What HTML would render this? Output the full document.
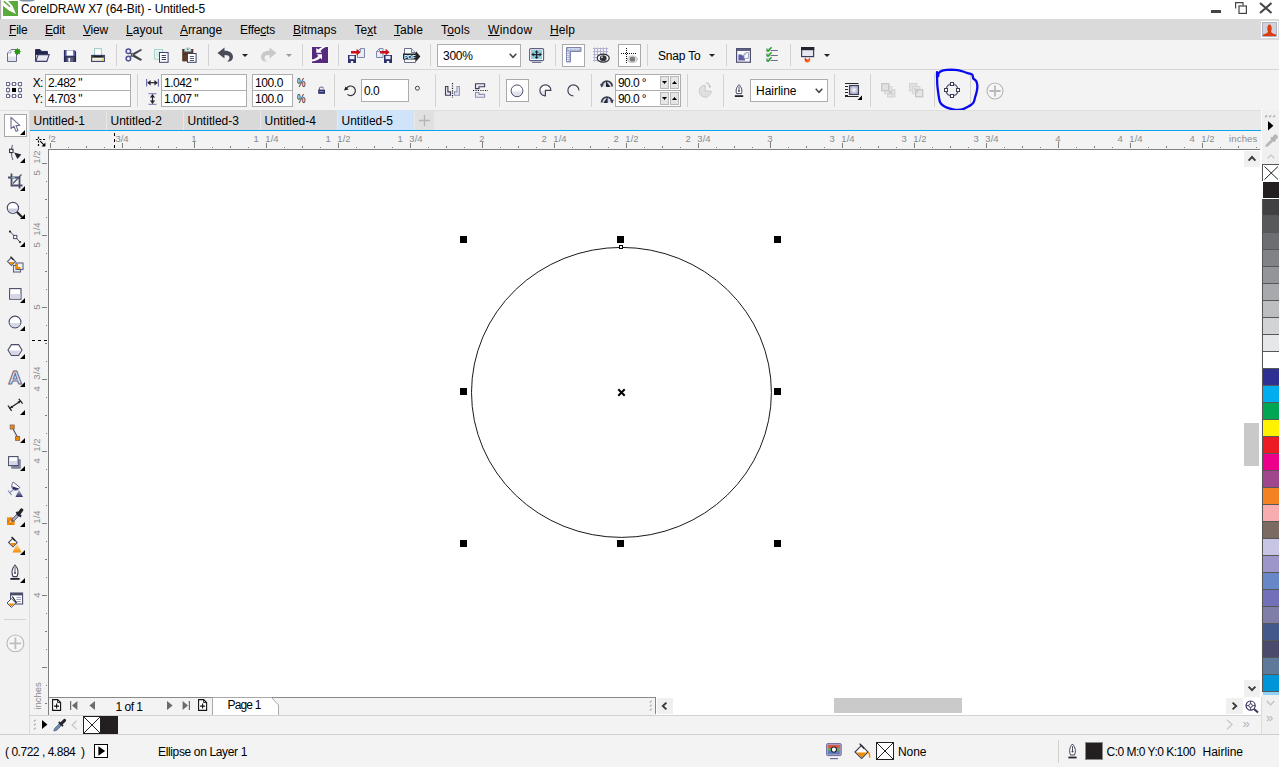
<!DOCTYPE html><html><head><meta charset="utf-8"><title>CorelDRAW X7 (64-Bit) - Untitled-5</title><style>
html,body{margin:0;padding:0}
body{width:1279px;height:767px;overflow:hidden;background:#f0f0f0;position:relative;
 font-family:"Liberation Sans",sans-serif;font-size:12px;color:#111;}
.a{position:absolute}
.t{position:absolute;white-space:nowrap;line-height:14px;height:14px;transform-origin:0 50%}
.box{position:absolute;box-sizing:border-box}
svg{position:absolute;overflow:visible}
u{text-decoration:underline;text-underline-offset:1px}
.inp{position:absolute;box-sizing:border-box;background:#fff;border:1px solid #ababab}
.sep{position:absolute;width:1px;background:#d0d0d0}
</style></head><body>
<div class="box" style="left:0px;top:0px;width:1279px;height:19px;background:#fff;"></div>
<div class="box" style="left:0px;top:19px;width:1279px;height:21px;background:#dadada;"></div>
<div class="box" style="left:0px;top:40px;width:1279px;height:29px;background:#f3f3f3;"></div>
<div class="box" style="left:0px;top:69px;width:1279px;height:1px;background:#d6d6d6;"></div>
<div class="box" style="left:0px;top:70px;width:1279px;height:40px;background:#f3f3f3;"></div>
<div class="box" style="left:0px;top:110px;width:1279px;height:21px;background:#f0f0f0;"></div>
<div class="box" style="left:0px;top:110px;width:30px;height:625px;background:#f2f2f2;"></div>
<div class="box" style="left:0px;top:110px;width:30px;height:1px;background:#e2e2e2;"></div>
<div class="box" style="left:49px;top:150px;width:1212px;height:548px;background:#fff;"></div>
<svg style="left:0;top:0" width="40" height="19" viewBox="0 0 40 19">
<rect x="0" y="0" width="1.2" height="19" fill="#b4b4b4"/>
<ellipse cx="27" cy="0" rx="8" ry="1.6" fill="#7d92a3"/>
<rect x="3" y="1" width="15" height="15" fill="#5aaa3c"/>
<path d="M3 1 L8.3 1 L12.5 6 L16 14 L9 10.5 L3 5.8 Z" fill="#fff"/>
<path d="M4.2 1.6 L9.6 6.3" stroke="#5aaa3c" stroke-width="1.4" stroke-linecap="round"/>
</svg>
<div class="t" style="left:21px;top:2px;font-size:12px;letter-spacing:-0.106px;color:#000;">CorelDRAW X7 (64-Bit) - Untitled-5</div>
<div class="box" style="left:1211px;top:10px;width:10px;height:3px;background:#444;"></div>
<svg style="left:1234px;top:1px" width="14" height="14" viewBox="0 0 14 14" fill="none" stroke="#444" stroke-width="1.2">
<path d="M1.6 7.5 V1.6 H9 V4.5" /><rect x="5" y="5" width="7.4" height="7.4"/></svg>
<svg style="left:1259px;top:2px" width="14" height="12" viewBox="0 0 14 12" fill="none" stroke="#444" stroke-width="2">
<path d="M1 1 L12.5 11 M12.5 1 L1 11"/></svg>
<div class="t" style="left:9px;top:23px;font-size:12px;letter-spacing:-0.211px;color:#000;"><u>F</u>ile</div>
<div class="t" style="left:45px;top:23px;font-size:12px;letter-spacing:-0.168px;color:#000;"><u>E</u>dit</div>
<div class="t" style="left:83px;top:23px;font-size:12px;letter-spacing:-0.199px;color:#000;"><u>V</u>iew</div>
<div class="t" style="left:126px;top:23px;font-size:12px;letter-spacing:0.081px;color:#000;"><u>L</u>ayout</div>
<div class="t" style="left:180px;top:23px;font-size:12px;letter-spacing:-0.098px;color:#000;"><u>A</u>rrange</div>
<div class="t" style="left:240px;top:23px;font-size:12px;letter-spacing:-0.205px;color:#000;">Effe<u>c</u>ts</div>
<div class="t" style="left:293px;top:23px;font-size:12px;letter-spacing:0.022px;color:#000;"><u>B</u>itmaps</div>
<div class="t" style="left:354.5px;top:23px;font-size:12px;letter-spacing:0.000px;color:#000;">Te<u>x</u>t</div>
<div class="t" style="left:394px;top:23px;font-size:12px;letter-spacing:0.062px;color:#000;"><u>T</u>able</div>
<div class="t" style="left:441px;top:23px;font-size:12px;letter-spacing:0.197px;color:#000;">T<u>o</u>ols</div>
<div class="t" style="left:488px;top:23px;font-size:12px;letter-spacing:0.302px;color:#000;"><u>W</u>indow</div>
<div class="t" style="left:550px;top:23px;font-size:12px;letter-spacing:0.078px;color:#000;"><u>H</u>elp</div>
<div class="box" style="left:1261px;top:21px;width:17px;height:17px;background:#fff;"></div>
<div class="box" style="left:1262px;top:22px;width:15px;height:15px;background:#cfd2dc;border:1px solid #aeb2c0"></div>
<svg style="left:1263px;top:23px" width="13" height="13" viewBox="0 0 13 13"><path d="M0 13 V11.5 C2 10.5 4.5 10.5 5 8.5 C3.5 6 4.5 1.5 6.5 1.5 C8.5 1.5 9.5 6 8 8.5 C8.5 10.5 11 10.5 13 11.5 V13 Z" fill="#dd3d0e"/></svg>
<svg style="left:6px;top:47px" width="16" height="16" viewBox="0 0 16 16" ><path d="M1.5 6 L5 2.5 H10.5 V14.5 H1.5 Z" fill="#fff" stroke="#6a6d8c" stroke-width="1"/>
<path d="M1.5 6 H5 V2.5" fill="#dfeef0" stroke="#8f93b8" stroke-width="0.8"/><rect x="2" y="9.5" width="8" height="4.5" fill="#e0e2ee"/>
<path d="M11.4 0.8 L12.2 2.4 L14 2 L13.6 3.8 L15.2 4.6 L13.6 5.4 L14 7.2 L12.2 6.8 L11.4 8.4 L10.6 6.8 L8.8 7.2 L9.2 5.4 L7.6 4.6 L9.2 3.8 L8.8 2 L10.6 2.4 Z" fill="#2a9a10"/><circle cx="11.4" cy="4.6" r="2.4" fill="#2a9a10"/></svg>
<svg style="left:35px;top:49px" width="15" height="13" viewBox="0 0 15 13" ><path d="M0.6 12 V0.6 H5 L6.6 2.4 H12.4 V5.4 H0.6" fill="#23254f" stroke="#23254f" stroke-width="1"/>
<path d="M0.8 12.4 L3.2 5.6 H14.2 L11.8 12.4 Z" fill="#e6e8f2" stroke="#3d3f6a" stroke-width="1.1"/></svg>
<svg style="left:64px;top:50px" width="12" height="12" viewBox="0 0 12 12" ><path d="M0 0 H10.4 L12 1.6 V12 H0 Z" fill="#5558a4"/><rect x="0" y="6" width="12" height="6" fill="#33355f"/><path d="M0.4 0 V12 M11.6 1.4 V12" stroke="#23254f" stroke-width="0.9"/>
<rect x="2.6" y="0.4" width="6.6" height="5.2" fill="#fff"/><rect x="2.6" y="7.4" width="6.8" height="4.6" fill="#5d6080"/><rect x="4.4" y="8" width="1.7" height="3.6" fill="#fff"/></svg>
<svg style="left:91px;top:47px" width="14" height="15" viewBox="0 0 14 15" ><rect x="3.6" y="1.6" width="6.8" height="7.4" fill="#fff" stroke="#9ccac8" stroke-width="1"/>
<rect x="0.6" y="8.4" width="12.8" height="6" fill="#f1f1dc" stroke="#3d3f6a" stroke-width="1.1"/>
<path d="M1 9.2 H13 V10.6 H1 Z" fill="#16171f"/><path d="M3.2 8.2 V9.4 H10.8 V8.2" fill="none" stroke="#16171f" stroke-width="1"/><rect x="10.8" y="12" width="1.3" height="1.3" fill="#e8c800"/></svg>
<div class="box" style="left:116px;top:44px;width:1px;height:22px;background:#d2d2d2;"></div>
<svg style="left:125px;top:48px" width="18" height="14" viewBox="0 0 18 14" ><path d="M5 4.4 L16.8 11.6 L15.6 12.4 L7 8 Z M5 9.2 L16.8 2 L15.6 1.4 L7 6 Z" fill="#3a3b44" stroke="#3a3b44" stroke-width="0.6"/>
<g fill="none" stroke="#4f5196" stroke-width="1.5"><circle cx="3.4" cy="3.2" r="2.3"/><circle cx="3.4" cy="10.6" r="2.3"/></g></svg>
<svg style="left:154px;top:49px" width="15" height="14" viewBox="0 0 15 14" ><rect x="0.6" y="0.6" width="8" height="9.5" fill="#f2faf8" stroke="#9fcfc8"/><path d="M2 3 H7 M2 5 H7 M2 7 H5" stroke="#b5dcd6" stroke-width="0.9"/>
<rect x="5.5" y="3.5" width="8.6" height="9.8" fill="#fff" stroke="#3d3f6a"/>
<path d="M7.6 6.5 H12 M7.6 8.5 H12 M7.6 10.5 H12" stroke="#3d3f6a" stroke-width="1"/></svg>
<svg style="left:182px;top:47px" width="15" height="16" viewBox="0 0 15 16" ><rect x="0.8" y="2.5" width="10" height="11.4" fill="#5d3d2c" stroke="#4a2f22"/><path d="M1 7.4 H10.6" stroke="#3f271b" stroke-width="0.8"/>
<path d="M2.6 3.4 C2.6 0.2 9 0.2 9 3.4 V4.2 H2.6 Z" fill="#e8f6f4" stroke="#8fbcb8" stroke-width="0.9"/><circle cx="5.8" cy="2.4" r="0.8" fill="#5d6080"/>
<rect x="5.5" y="6.5" width="8.6" height="8.8" fill="#fff" stroke="#3d3f6a"/>
<path d="M7.8 9.5 H12 M7.8 11.5 H12 M7.8 13.5 H12" stroke="#4a4c6a" stroke-width="0.9"/></svg>
<div class="box" style="left:208px;top:44px;width:1px;height:22px;background:#d2d2d2;"></div>
<svg style="left:217px;top:47px" width="17" height="15" viewBox="0 0 17 15" ><path d="M0.5 6 L7.5 0.5 V3.8 C13 3.8 16 6.5 16 10 C16 12.5 14 14.5 11.5 14.5 H10 C12 13.5 12.5 12 12.5 10.6 C12.5 8.8 10.5 8 7.5 8 V11.5 Z" fill="#4a4c57"/></svg>
<svg style="left:242px;top:54px" width="6" height="3" viewBox="0 0 6 3" ><path d="M0 0 H6 L3.0 3 Z" fill="#222"/></svg>
<svg style="left:260px;top:47px" width="17" height="15" viewBox="0 0 17 15" ><g transform="translate(17,0) scale(-1,1)"><path d="M0.5 6 L7.5 0.5 V3.8 C13 3.8 16 6.5 16 10 C16 12.5 14 14.5 11.5 14.5 H10 C12 13.5 12.5 12 12.5 10.6 C12.5 8.8 10.5 8 7.5 8 V11.5 Z" fill="#c9c9c9"/></g></svg>
<svg style="left:286px;top:54px" width="6" height="3" viewBox="0 0 6 3" ><path d="M0 0 H6 L3.0 3 Z" fill="#9a9a9a"/></svg>
<div class="box" style="left:302px;top:44px;width:1px;height:22px;background:#d2d2d2;"></div>
<svg style="left:312px;top:47px" width="16" height="16" viewBox="0 0 16 16" ><rect x="-0.5" y="-0.5" width="17" height="17" fill="#fafafa"/><rect width="16" height="16" fill="#56297c"/>
<path d="M4.3 0.9 V5.8 H10 L8.4 4.2 C9.6 2.4 11.4 0.9 14 0 H10.4 C8.8 0.6 7.4 1.4 6.3 2.6 Z" fill="#fff"/><path d="M4.6 7.2 H10 V12.5 L8.3 10.9 C6.4 12.8 3.6 14 0 14.4 V12.6 C2.8 11.8 4.8 10.8 6.3 8.9 Z" fill="#fff"/></svg>
<div class="box" style="left:338px;top:44px;width:1px;height:22px;background:#d2d2d2;"></div>
<svg style="left:348px;top:47px" width="17" height="16" viewBox="0 0 17 16" ><path d="M9.5 4.5 L12.5 1.5 H16.5 V10.5 H9.5 Z" fill="#e3f0f2" stroke="#7f86ad" stroke-width="1"/><path d="M9.5 4.5 H12.5 V1.5" fill="none" stroke="#7f86ad" stroke-width="0.9"/><rect x="0" y="8" width="8" height="8" fill="#2d2f6a"/><rect x="1.5" y="8.8" width="5" height="3.4" fill="#eceef6"/><rect x="2.8" y="14" width="2.4" height="2" fill="#eceef6"/><path d="M3 4 H8.6 V1.8 L12.6 5.2 L8.6 8.6 V6.4 H3 Z" fill="#c8101a"/></svg>
<svg style="left:376px;top:47px" width="17" height="16" viewBox="0 0 17 16" ><path d="M0.5 4.5 L3.5 1.5 H7 V10.5 H0.5 Z" fill="#e3f0f2" stroke="#7f86ad" stroke-width="1"/><path d="M0.5 4.5 H3.5 V1.5" fill="none" stroke="#7f86ad" stroke-width="0.9"/><rect x="8" y="8" width="8" height="8" fill="#2d2f6a"/><rect x="9.5" y="8.8" width="5" height="3.4" fill="#eceef6"/><rect x="10.8" y="14" width="2.4" height="2" fill="#eceef6"/><path d="M4 4 H9.6 V1.8 L13.6 5.2 L9.6 8.6 V6.4 H4 Z" fill="#c8101a"/></svg>
<svg style="left:403px;top:47px" width="18" height="16" viewBox="0 0 18 16" ><path d="M1.5 1.5 H8.5 L12.5 5.5 V15.5 H1.5 Z" fill="#f7f9fb" stroke="#6a6d8c" stroke-width="1"/><path d="M8.5 1.5 V5.5 H12.5" fill="#dfeef0" stroke="#6a6d8c" stroke-width="0.9"/>
<path d="M0 6.4 H13 V4.2 L17.4 9.4 L13 14.4 V12.4 H0 Z" fill="#23242c"/>
<text x="1" y="11.6" font-family="Liberation Sans,sans-serif" font-weight="bold" font-size="6" fill="#fff" style="letter-spacing:-0.2px">PDF</text></svg>
<div class="box" style="left:430px;top:44px;width:1px;height:22px;background:#d2d2d2;"></div>
<div class="inp" style="left:437px;top:44px;width:84px;height:23px;border-color:#adadad"></div>
<div class="t" style="left:443px;top:49px;font-size:12px;letter-spacing:-0.297px;color:#000;">300%</div>
<svg style="left:509px;top:53px" width="8" height="6" viewBox="0 0 8 6" ><path d="M0.7 0.7 L4 4.3 L7.3 0.7" fill="none" stroke="#444" stroke-width="1.5"/></svg>
<svg style="left:529px;top:48px" width="16" height="15" viewBox="0 0 16 15" ><rect x="0.6" y="0.6" width="14" height="12" rx="1.2" fill="#fff" stroke="#5d6080" stroke-width="1.1"/><rect x="2" y="2" width="11.2" height="9.2" fill="#8fd0dc"/>
<path d="M7.6 2.2 L9.6 4.4 H8.2 V6 H10.6 V4.6 L12.8 6.6 L10.6 8.6 V7.2 H8.2 V8.8 H9.6 L7.6 11 L5.6 8.8 H7 V7.2 H4.6 V8.6 L2.4 6.6 L4.6 4.6 V6 H7 V4.4 H5.6 Z" fill="#1d1f2b"/>
<path d="M3 14.4 H12.2" stroke="#6a6d8c" stroke-width="1.1"/></svg>
<div class="box" style="left:555px;top:44px;width:1px;height:22px;background:#d2d2d2;"></div>
<div class="inp" style="left:562px;top:44px;width:23px;height:23px;border-color:#a9a9a9"></div>
<svg style="left:566px;top:47px" width="16" height="16" viewBox="0 0 16 16" ><path d="M0.5 0.5 H15 V4.5 H4.5 V15 H0.5 Z" fill="#a9b3d6" stroke="#7f86ad"/>
<path d="M3 1 V3 M5 1 V2.4 M7 1 V3 M9 1 V2.4 M11 1 V3 M13 1 V2.4 M1 5.5 H2.6 M1 7.5 H3 M1 9.5 H2.6 M1 11.5 H3 M1 13.5 H2.6" stroke="#fff" stroke-width="0.9"/></svg>
<svg style="left:593px;top:47px" width="17" height="16" viewBox="0 0 17 16" ><path d="M1.5 0.5 V14.5 M4.5 0.5 V14.5 M7.5 0.5 V8 M10.5 0.5 V7 M13.5 0.5 V7 M0 1.5 H15 M0 4.5 H15 M0 7.5 H6 M0 10.5 H5 M0 13.5 H5" stroke="#b2b2d2" stroke-width="1"/>
<ellipse cx="10.2" cy="11.2" rx="6" ry="4" fill="#fff" stroke="#2a2a33" stroke-width="1.2"/><ellipse cx="10.2" cy="11.2" rx="3.4" ry="3" fill="#33333c"/><circle cx="9" cy="10.2" r="0.9" fill="#ddd"/></svg>
<div class="inp" style="left:618px;top:44px;width:23px;height:23px;border-color:#a9a9a9"></div>
<svg style="left:621px;top:47px" width="17" height="16" viewBox="0 0 17 16" ><path d="M0 6.5 H15" stroke="#111" stroke-width="1" stroke-dasharray="1 1"/><path d="M5.5 1 V16" stroke="#111" stroke-width="1" stroke-dasharray="1 1"/>
<ellipse cx="11.4" cy="12.2" rx="5" ry="3.2" fill="#e9e9e9" stroke="#aaa" stroke-width="0.8"/><ellipse cx="11.4" cy="12.2" rx="2.8" ry="2.4" fill="#77777c"/></svg>
<div class="box" style="left:647px;top:44px;width:1px;height:22px;background:#d2d2d2;"></div>
<div class="t" style="left:658px;top:49px;font-size:12px;letter-spacing:-0.185px;color:#000;">Snap To</div>
<svg style="left:709px;top:54px" width="6" height="3" viewBox="0 0 6 3" ><path d="M0 0 H6 L3.0 3 Z" fill="#222"/></svg>
<div class="box" style="left:726px;top:44px;width:1px;height:22px;background:#d2d2d2;"></div>
<svg style="left:736px;top:48px" width="15" height="15" viewBox="0 0 15 15" ><rect x="0.6" y="0.6" width="13.8" height="13.6" fill="#fdfdfe" stroke="#4a4c6a" stroke-width="1.2"/><rect x="0.6" y="0.6" width="13.8" height="2.4" fill="#5d6080"/>
<path d="M2.4 6.4 H5.4 L6.4 7.4 H9 V12.4 H2.4 Z" fill="#5b5ea6"/><path d="M8 6.4 L9.8 4.6 H12.4 V10.4 H8 Z" fill="#fff" stroke="#8f93b8" stroke-width="0.9"/><path d="M8 6.4 H9.8 V4.6" fill="#cfe9e4" stroke="#8f93b8" stroke-width="0.7"/></svg>
<svg style="left:765px;top:46px" width="14" height="17" viewBox="0 0 14 17" ><path d="M5.6 4.5 H12.8 M5.6 9.5 H12.8 M5.6 14.5 H12.8" stroke="#6a6d8c" stroke-width="1.1"/>
<g fill="#e4e4ea" stroke="#b9bbcb" stroke-width="0.7"><rect x="1.4" y="2.6" width="3.2" height="3"/><rect x="1.4" y="7.6" width="3.2" height="3"/><rect x="1.4" y="12.6" width="3.2" height="3"/></g>
<path d="M1.6 3.4 L3 5.2 L6.6 1.2 M1.6 8.4 L3 10.2 L6.6 6.2 M1.6 13.4 L3 15.2 L6.6 11.2" fill="none" stroke="#18a018" stroke-width="1.3"/></svg>
<div class="box" style="left:790px;top:44px;width:1px;height:22px;background:#d2d2d2;"></div>
<svg style="left:801px;top:47px" width="14" height="16" viewBox="0 0 14 16" ><rect x="0.6" y="0.6" width="12" height="9" fill="#e4e6f0" stroke="#3d3f55" stroke-width="1.2"/><rect x="0" y="0" width="13.2" height="3.2" fill="#23242c"/>
<linearGradient id="fl" x1="0.2" y1="0" x2="0.9" y2="1"><stop offset="0" stop-color="#f01818"/><stop offset="0.55" stop-color="#f4501c"/><stop offset="1" stop-color="#ffd83a"/></linearGradient>
<path d="M4.4 10.2 C3 12 3.4 14.6 6.2 15.8 C9 15.6 10.2 13 8.6 10.2 C8.4 11.6 7.6 12.4 6.6 12.4 C5.4 12.4 4.6 11.6 4.4 10.2 Z" fill="url(#fl)"/></svg>
<svg style="left:824px;top:54px" width="6" height="3" viewBox="0 0 6 3" ><path d="M0 0 H6 L3.0 3 Z" fill="#222"/></svg>
<svg style="left:6px;top:82px" width="17" height="17" viewBox="0 0 17 17" ><g fill="#fff" stroke="#6a6d8c" stroke-width="1">
<rect x="0.5" y="0.5" width="3" height="3"/><rect x="6.5" y="0.5" width="3" height="3"/><rect x="12.5" y="0.5" width="3" height="3"/>
<rect x="0.5" y="6.5" width="3" height="3"/><rect x="12.5" y="6.5" width="3" height="3"/>
<rect x="0.5" y="12.5" width="3" height="3"/><rect x="6.5" y="12.5" width="3" height="3"/><rect x="12.5" y="12.5" width="3" height="3"/></g>
<path d="M3.5 2 H6.5 M9.5 2 H12.5 M3.5 14 H6.5 M9.5 14 H12.5 M2 3.5 V6.5 M2 9.5 V12.5 M14 3.5 V6.5 M14 9.5 V12.5" stroke="#8f93b8" stroke-width="1"/>
<rect x="6" y="6" width="4" height="4" fill="#000"/></svg>
<div class="t" style="left:32.7px;top:76px;font-size:12px;letter-spacing:-0.664px;color:#000;">X:</div>
<div class="t" style="left:32.7px;top:92px;font-size:12px;letter-spacing:-0.336px;color:#000;">Y:</div>
<div class="inp" style="left:45px;top:74px;width:86px;height:17px;border-color:#adadad"></div>
<div class="inp" style="left:45px;top:90px;width:86px;height:17px;border-color:#adadad"></div>
<div class="t" style="left:48px;top:76px;font-size:12px;letter-spacing:-0.516px;color:#000;">2.482 "</div>
<div class="t" style="left:48px;top:92px;font-size:12px;letter-spacing:-0.516px;color:#000;">4.703 "</div>
<div class="box" style="left:137px;top:74px;width:1px;height:33px;background:#d2d2d2;"></div>
<svg style="left:146px;top:79px" width="13" height="8" viewBox="0 0 13 8" ><path d="M0.6 0 V7.4 M12.4 0 V7.4" stroke="#6a6cb0" stroke-width="1.2"/><path d="M2 3.7 H11" stroke="#23242c" stroke-width="1.2"/>
<path d="M1.2 3.7 L4.6 1 V6.4 Z M11.8 3.7 L8.4 1 V6.4 Z" fill="#23242c"/></svg>
<svg style="left:148px;top:93px" width="9" height="12" viewBox="0 0 9 12" ><path d="M0.5 0.6 H8.5 M0.5 11.4 H8.5" stroke="#8a8cc0" stroke-width="1.2"/><path d="M4.5 1.5 V10.5" stroke="#23242c" stroke-width="1.2"/>
<path d="M4.5 1.2 L7.2 4.4 H1.8 Z M4.5 10.8 L7.2 7.6 H1.8 Z" fill="#23242c"/></svg>
<div class="inp" style="left:161px;top:74px;width:86px;height:17px;border-color:#adadad"></div>
<div class="inp" style="left:161px;top:90px;width:86px;height:17px;border-color:#adadad"></div>
<div class="t" style="left:164px;top:76px;font-size:12px;letter-spacing:-0.516px;color:#000;">1.042 "</div>
<div class="t" style="left:164px;top:92px;font-size:12px;letter-spacing:-0.516px;color:#000;">1.007 "</div>
<div class="inp" style="left:252px;top:74px;width:41px;height:17px;border-color:#adadad"></div>
<div class="inp" style="left:252px;top:90px;width:41px;height:17px;border-color:#adadad"></div>
<div class="t" style="left:255px;top:76px;font-size:12px;letter-spacing:-0.403px;color:#000;">100.0</div>
<div class="t" style="left:255px;top:92px;font-size:12px;letter-spacing:-0.403px;color:#000;">100.0</div>
<div class="t" style="left:297px;top:76px;font-size:12px;color:#000;transform:scaleX(0.8);transform-origin:0 50%;">%</div>
<div class="t" style="left:297px;top:92px;font-size:12px;color:#000;transform:scaleX(0.8);transform-origin:0 50%;">%</div>
<svg style="left:318px;top:86px" width="8" height="8" viewBox="0 0 8 8" ><path d="M1.4 4.2 V2.6 C1.4 0.4 5.4 0.4 5.4 2.6" fill="none" stroke="#6a6d8c" stroke-width="1.1"/><rect x="0.2" y="3.6" width="6.8" height="4.2" fill="#2d2f6a"/><rect x="1.4" y="5" width="4.4" height="0.9" fill="#8f93b8"/></svg>
<div class="box" style="left:334px;top:74px;width:1px;height:33px;background:#d2d2d2;"></div>
<svg style="left:343px;top:84px" width="14" height="13" viewBox="0 0 14 13" ><path d="M3.4 4.4 A4.8 4.8 0 1 1 4.4 10.4" fill="none" stroke="#33343f" stroke-width="1.2"/><path d="M1 6.6 L2.6 2.6 L5.6 5.6 Z" fill="#23242c"/></svg>
<div class="inp" style="left:361px;top:79px;width:48px;height:23px;border-color:#adadad"></div>
<div class="t" style="left:364px;top:84px;font-size:12px;letter-spacing:-0.557px;color:#000;">0.0</div>
<svg style="left:414px;top:85px" width="7" height="7" viewBox="0 0 7 7" ><circle cx="3.4" cy="3.2" r="2" fill="none" stroke="#333" stroke-width="0.9"/></svg>
<div class="box" style="left:435px;top:74px;width:1px;height:33px;background:#d2d2d2;"></div>
<svg style="left:444px;top:82px" width="17" height="17" viewBox="0 0 17 17" ><path d="M8.5 1 V16" stroke="#23242c" stroke-width="1.2" stroke-dasharray="1.2 1.2"/>
<path d="M1.5 4.5 H3.9 V9.9 H6.5 V13.2 H1.5 Z" fill="#e6e8f2" stroke="#3d3f55" stroke-width="1.1"/>
<path d="M15.4 4.5 H13 V9.9 H10.4 V13.2 H15.4 Z" fill="#e6e8f2" stroke="#8f93b8" stroke-width="1.1"/></svg>
<svg style="left:472px;top:82px" width="17" height="17" viewBox="0 0 17 17" ><path d="M1 8.5 H16" stroke="#23242c" stroke-width="1.2" stroke-dasharray="1.2 1.2"/>
<path d="M3.5 1.8 H12.6 V4.7 H7 V6.6 H3.5 Z" fill="#e6e8f2" stroke="#3d3f55" stroke-width="1.1"/>
<path d="M3.5 15.3 H12.6 V12.4 H7 V10.5 H3.5 Z" fill="#e6e8f2" stroke="#8f93b8" stroke-width="1.1"/></svg>
<div class="box" style="left:499px;top:74px;width:1px;height:33px;background:#d2d2d2;"></div>
<div class="inp" style="left:506px;top:79px;width:23px;height:23px;border-color:#a9a9a9"></div>
<svg style="left:510px;top:83px" width="15" height="15" viewBox="0 0 15 15" ><circle cx="7" cy="7.8" r="5.9" fill="#fff"/><path d="M1.3 8.4 H12.7 A5.8 5.8 0 0 1 1.3 8.4 Z" fill="#e0e2ee"/><circle cx="7" cy="7.8" r="5.9" fill="none" stroke="#4a4c6a" stroke-width="1"/></svg>
<svg style="left:538px;top:82.7px" width="15" height="15" viewBox="0 0 15 15" ><path d="M7.4 7.4 H12.9 A5.5 5.5 0 1 0 7.4 12.9 Z" fill="#fff"/><path d="M7.4 7.4 V12.9 A5.5 5.5 0 0 1 1.9 8 H7.4 Z" fill="#e0e2ee"/><path d="M7.4 7.4 H12.9 A5.5 5.5 0 1 0 7.4 12.9 Z" fill="none" stroke="#3d3f55" stroke-width="1.15"/></svg>
<svg style="left:565.6px;top:82.6px" width="15" height="15" viewBox="0 0 15 15" ><path d="M12.9 7.4 A5.5 5.5 0 1 0 7.4 12.9" fill="none" stroke="#3d3f55" stroke-width="1.15"/></svg>
<div class="box" style="left:591px;top:74px;width:1px;height:33px;background:#d2d2d2;"></div>
<svg style="left:600px;top:77px" width="14" height="11" viewBox="0 0 14 11" ><path d="M1.6 9.4 A5.3 5.3 0 0 1 12.2 9.4 Z" fill="#d5d8e6"/><path d="M1.6 9.4 A5.3 5.3 0 0 1 12.2 9.4" fill="none" stroke="#3d3f55" stroke-width="1.8"/><path d="M6 10 V4 L10.4 10 Z" fill="#23242c"/><path d="M0 6.8 L1.6 10.4 L3.8 7.6 Z" fill="#3d3f55"/></svg>
<svg style="left:600px;top:93px" width="14" height="11" viewBox="0 0 14 11" ><path d="M1.6 9.4 A5.3 5.3 0 0 1 12.2 9.4 Z" fill="#d5d8e6"/><path d="M1.6 9.4 A5.3 5.3 0 0 1 12.2 9.4" fill="none" stroke="#3d3f55" stroke-width="1.8"/><path d="M7.6 10 V4 L3.4 10 Z" fill="#23242c"/><path d="M13.8 6.8 L12.2 10.4 L10 7.6 Z" fill="#3d3f55"/></svg>
<div class="inp" style="left:615px;top:74px;width:66px;height:17px;border-color:#adadad"></div>
<div class="inp" style="left:615px;top:90px;width:66px;height:17px;border-color:#adadad"></div>
<div class="t" style="left:618px;top:76px;font-size:12px;letter-spacing:-0.578px;color:#000;">90.0 °</div>
<div class="t" style="left:618px;top:92px;font-size:12px;letter-spacing:-0.578px;color:#000;">90.0 °</div>
<div class="box" style="left:660px;top:76px;width:9px;height:13px;background:#e6e6e6;border:1px solid #b8b8b8"></div>
<div class="box" style="left:670px;top:76px;width:9px;height:13px;background:#e6e6e6;border:1px solid #b8b8b8"></div>
<svg style="left:662px;top:81px" width="5" height="3" viewBox="0 0 5 3" ><path d="M0 0 H5 L2.5 3 Z" fill="#000"/></svg>
<svg style="left:672px;top:81px" width="5" height="3" viewBox="0 0 5 3" ><path d="M0 3 H5 L2.5 0 Z" fill="#000"/></svg>
<div class="box" style="left:660px;top:92px;width:9px;height:13px;background:#e6e6e6;border:1px solid #b8b8b8"></div>
<div class="box" style="left:670px;top:92px;width:9px;height:13px;background:#e6e6e6;border:1px solid #b8b8b8"></div>
<svg style="left:662px;top:97px" width="5" height="3" viewBox="0 0 5 3" ><path d="M0 0 H5 L2.5 3 Z" fill="#000"/></svg>
<svg style="left:672px;top:97px" width="5" height="3" viewBox="0 0 5 3" ><path d="M0 3 H5 L2.5 0 Z" fill="#000"/></svg>
<div class="box" style="left:687px;top:74px;width:1px;height:33px;background:#d2d2d2;"></div>
<svg style="left:699px;top:82px" width="14" height="16" viewBox="0 0 14 16" ><path d="M6.2 9.1 V3.1 A6 6 0 1 0 12.2 9.1 Z" fill="#e0e0e0" stroke="#c9c9c9" stroke-width="1"/><path d="M7.2 0.8 C9 1.2 10.4 2.6 10.8 4.4" fill="none" stroke="#c2c2c2" stroke-width="1.1"/><path d="M9.2 4 L12.2 4 L10.8 6.2 Z" fill="#c2c2c2"/></svg>
<div class="box" style="left:723px;top:74px;width:1px;height:33px;background:#d2d2d2;"></div>
<svg style="left:734px;top:84px" width="10" height="14" viewBox="0 0 10 14" ><path d="M5 0.6 C7.5 3.5 8.6 6 7.4 9.6 H2.6 C1.4 6 2.5 3.5 5 0.6 Z" fill="#fff" stroke="#3d3f55" stroke-width="1"/><path d="M5 2.5 V6.5" stroke="#3d3f55" stroke-width="0.9"/><circle cx="5" cy="7" r="0.9" fill="#3d3f55"/>
<rect x="0.8" y="11.2" width="8.4" height="1.8" fill="#23242c"/></svg>
<div class="inp" style="left:750px;top:79px;width:78px;height:23px;border-color:#adadad"></div>
<div class="t" style="left:756px;top:84px;font-size:12px;letter-spacing:-0.025px;color:#000;">Hairline</div>
<svg style="left:815px;top:88px" width="8" height="6" viewBox="0 0 8 6" ><path d="M0.7 0.7 L4 4.3 L7.3 0.7" fill="none" stroke="#444" stroke-width="1.5"/></svg>
<div class="box" style="left:834px;top:74px;width:1px;height:33px;background:#d2d2d2;"></div>
<svg style="left:845px;top:83px" width="18" height="18" viewBox="0 0 18 18" ><radialGradient id="wg" cx="0.5" cy="0.5" r="0.6"><stop offset="0" stop-color="#fff"/><stop offset="1" stop-color="#8f93b8"/></radialGradient>
<rect x="4.5" y="2.5" width="9" height="9" fill="url(#wg)" stroke="#3d3f55" stroke-width="1.1"/>
<path d="M0 0.5 H13.5 M0 3.5 H3 M0 6.5 H3 M0 9.5 H3 M0 12.5 H3 M0 13.5 H13.5" stroke="#23242c" stroke-width="1"/>
<path d="M17 12.5 V17 H12.5 Z" fill="#000"/></svg>
<div class="box" style="left:870px;top:74px;width:1px;height:33px;background:#d2d2d2;"></div>
<svg style="left:881px;top:83px" width="15" height="15" viewBox="0 0 15 15" ><rect x="6.5" y="6.5" width="7.4" height="7.4" fill="#e2e2e2" stroke="#d2d2d2"/><rect x="3.5" y="3.5" width="7.4" height="7.4" fill="#e4e4e4" stroke="#d6d6d6"/><rect x="0.7" y="0.7" width="7" height="7" fill="#e2e2e2" stroke="#c6c6c6" stroke-width="1.3"/><path d="M8.4 8.4 L12 12 M8.4 8.4 V11 M8.4 8.4 H11" stroke="#c4c4c4" stroke-width="1"/></svg>
<svg style="left:909px;top:83px" width="15" height="15" viewBox="0 0 15 15" ><rect x="0.5" y="0.5" width="7.4" height="7.4" fill="#e2e2e2" stroke="#d2d2d2"/><rect x="3.5" y="3.5" width="7.4" height="7.4" fill="#e4e4e4" stroke="#d6d6d6"/><rect x="6.7" y="6.7" width="7" height="7" fill="#e6e6e6" stroke="#c6c6c6" stroke-width="1.3"/><path d="M5 5 L9 9 M9 9 V6.4 M9 9 H6.4" stroke="#c4c4c4" stroke-width="1"/></svg>
<div class="box" style="left:934px;top:74px;width:1px;height:33px;background:#d2d2d2;"></div>
<svg style="left:943px;top:81px" width="19" height="19" viewBox="0 0 19 19" ><circle cx="9" cy="9" r="6.1" fill="none" stroke="#5d6080" stroke-width="1.25"/>
<g fill="#fff" stroke="#3d3f55" stroke-width="1"><rect x="7.5" y="1.5" width="3" height="3"/><rect x="7.5" y="13.5" width="3" height="3"/><rect x="1.5" y="7.5" width="3" height="3"/><rect x="13.5" y="7.5" width="3" height="3"/></g></svg>
<div class="box" style="left:970px;top:74px;width:1px;height:33px;background:#d2d2d2;"></div>
<svg style="left:935px;top:68px" width="46" height="44" viewBox="0 0 46 44" ><path d="M2.00 4.25 C2.02 5.21 2.05 7.92 2.10 10.00 C2.15 12.08 2.15 14.58 2.30 16.75 C2.45 18.92 2.73 20.92 3.00 23.00 C3.27 25.08 3.55 27.38 3.90 29.25 C4.25 31.12 4.42 32.88 5.10 34.25 C5.78 35.62 6.75 36.56 8.00 37.50 C9.25 38.44 10.93 39.25 12.60 39.90 C14.27 40.55 16.23 41.05 18.00 41.40 C19.77 41.75 21.58 42.03 23.25 42.00 C24.92 41.97 26.54 41.66 28.00 41.20 C29.46 40.74 30.73 39.90 32.00 39.25 C33.27 38.60 34.56 38.02 35.60 37.30 C36.64 36.57 37.62 35.78 38.25 34.90 C38.88 34.02 39.09 32.94 39.40 32.00 C39.71 31.06 39.75 30.50 40.10 29.25 C40.45 28.00 41.13 26.06 41.50 24.50 C41.87 22.94 42.18 21.23 42.30 19.90 C42.42 18.57 42.35 17.55 42.20 16.50 C42.05 15.45 41.77 14.38 41.40 13.60 C41.03 12.82 40.52 12.32 40.00 11.80 C39.48 11.28 38.60 11.03 38.25 10.50 C37.90 9.97 38.06 9.22 37.90 8.60 C37.74 7.97 37.78 7.23 37.30 6.75 C36.82 6.27 35.88 6.01 35.00 5.70 C34.12 5.39 33.17 5.27 32.00 4.90 C30.83 4.53 29.35 3.92 28.00 3.50 C26.65 3.08 25.23 2.67 23.90 2.40 C22.57 2.13 21.36 2.01 20.00 1.90 C18.64 1.79 17.08 1.75 15.75 1.75 C14.42 1.75 13.25 1.79 12.00 1.90 C10.75 2.01 9.32 2.15 8.25 2.40 C7.18 2.65 6.32 2.98 5.60 3.40 C4.88 3.82 4.28 4.40 3.90 4.90 C3.52 5.40 3.41 5.88 3.30 6.40 C3.19 6.92 3.26 7.73 3.25 8.00" fill="none" stroke="#0a0aee" stroke-width="2.3" stroke-linecap="round" stroke-linejoin="round"/></svg>
<svg style="left:986px;top:82px" width="18" height="18" viewBox="0 0 18 18" ><circle cx="9" cy="9" r="8" fill="#f6f6f6" stroke="#b5b5b5" stroke-width="1.1"/><path d="M9 3.4 V14.6 M3.4 9 H14.6" stroke="#b9b9b9" stroke-width="1.8"/></svg>
<div class="box" style="left:30px;top:110px;width:1231px;height:20px;background:#e9e9e9;"></div>
<div class="box" style="left:30px;top:110px;width:1231px;height:1px;background:#dedede;"></div>
<div class="box" style="left:30px;top:110px;width:76px;height:20px;background:#d9d9d9;"></div>
<div class="t" style="left:33.5px;top:114px;font-size:12px;letter-spacing:0.014px;color:#000;">Untitled-1</div>
<div class="box" style="left:107px;top:110px;width:76px;height:20px;background:#d9d9d9;"></div>
<div class="t" style="left:110.5px;top:114px;font-size:12px;letter-spacing:0.014px;color:#000;">Untitled-2</div>
<div class="box" style="left:184px;top:110px;width:76px;height:20px;background:#d9d9d9;"></div>
<div class="t" style="left:187.5px;top:114px;font-size:12px;letter-spacing:0.014px;color:#000;">Untitled-3</div>
<div class="box" style="left:261px;top:110px;width:76px;height:20px;background:#d9d9d9;"></div>
<div class="t" style="left:264.5px;top:114px;font-size:12px;letter-spacing:0.014px;color:#000;">Untitled-4</div>
<div class="box" style="left:338px;top:110px;width:76px;height:20px;background:#cfe4f9;"></div>
<div class="t" style="left:341.5px;top:114px;font-size:12px;letter-spacing:0.014px;color:#000;">Untitled-5</div>
<div class="box" style="left:415px;top:110px;width:19px;height:20px;background:#e0e0e0;"></div>
<svg style="left:419px;top:115px" width="11" height="11" viewBox="0 0 11 11" ><path d="M5.5 0 V11 M0 5.5 H11" stroke="#b4b4b4" stroke-width="1.3"/></svg>
<div class="box" style="left:30px;top:130px;width:1231px;height:1px;background:#0aa4f2;"></div>
<div class="box" style="left:30px;top:131px;width:1231px;height:18px;background:#f3f3f3;"></div>
<div class="box" style="left:30px;top:149px;width:19px;height:566px;background:#f3f3f3;"></div>
<div class="box" style="left:29px;top:110px;width:1px;height:625px;background:#dcdcdc;"></div>
<svg style="left:0px;top:0px" width="1279" height="150" viewBox="0 0 1279 150" ><path d="M50.5 143 V148 M68.5 147 V148 M86.5 146 V148 M104.5 147 V148 M122.5 143 V148 M140.5 147 V148 M158.5 146 V148 M176.5 147 V148 M194.5 142 V148 M212.5 147 V148 M230.5 146 V148 M248.5 147 V148 M266.5 143 V148 M284.5 147 V148 M302.5 146 V148 M320.5 147 V148 M338.5 143 V148 M356.5 147 V148 M374.5 146 V148 M392.5 147 V148 M410.5 143 V148 M428.5 147 V148 M446.5 146 V148 M464.5 147 V148 M482.5 142 V148 M500.5 147 V148 M518.5 146 V148 M536.5 147 V148 M554.5 143 V148 M572.5 147 V148 M590.5 146 V148 M608.5 147 V148 M626.5 143 V148 M644.5 147 V148 M662.5 146 V148 M680.5 147 V148 M698.5 143 V148 M716.5 147 V148 M734.5 146 V148 M752.5 147 V148 M770.5 142 V148 M788.5 147 V148 M806.5 146 V148 M824.5 147 V148 M842.5 143 V148 M860.5 147 V148 M878.5 146 V148 M896.5 147 V148 M914.5 143 V148 M932.5 147 V148 M950.5 146 V148 M968.5 147 V148 M986.5 143 V148 M1004.5 147 V148 M1022.5 146 V148 M1040.5 147 V148 M1058.5 142 V148 M1076.5 147 V148 M1094.5 146 V148 M1112.5 147 V148 M1130.5 143 V148 M1148.5 147 V148 M1166.5 146 V148 M1184.5 147 V148 M1202.5 143 V148 M1220.5 147 V148 M1238.5 146 V148 M1256.5 147 V148" stroke="#7d7d7d" stroke-width="1"/></svg>
<div class="a" style="left:49px;top:132px;width:20px;height:14px;overflow:hidden"><div class="t" style="left:-6.5px;top:0;font-size:9.5px;color:#8b8b8b">1/2</div></div>
<div class="t" style="left:92px;width:60px;text-align:center;top:132px;font-size:9.5px;color:#8b8b8b;word-spacing:4px">3/4</div>
<div class="t" style="left:164px;width:60px;text-align:center;top:132px;font-size:9.5px;color:#8b8b8b;word-spacing:4px">1</div>
<div class="t" style="left:236px;width:60px;text-align:center;top:132px;font-size:9.5px;color:#8b8b8b;word-spacing:4px">1 1/4</div>
<div class="t" style="left:308px;width:60px;text-align:center;top:132px;font-size:9.5px;color:#8b8b8b;word-spacing:4px">1 1/2</div>
<div class="t" style="left:380px;width:60px;text-align:center;top:132px;font-size:9.5px;color:#8b8b8b;word-spacing:4px">1 3/4</div>
<div class="t" style="left:452px;width:60px;text-align:center;top:132px;font-size:9.5px;color:#8b8b8b;word-spacing:4px">2</div>
<div class="t" style="left:524px;width:60px;text-align:center;top:132px;font-size:9.5px;color:#8b8b8b;word-spacing:4px">2 1/4</div>
<div class="t" style="left:596px;width:60px;text-align:center;top:132px;font-size:9.5px;color:#8b8b8b;word-spacing:4px">2 1/2</div>
<div class="t" style="left:668px;width:60px;text-align:center;top:132px;font-size:9.5px;color:#8b8b8b;word-spacing:4px">2 3/4</div>
<div class="t" style="left:740px;width:60px;text-align:center;top:132px;font-size:9.5px;color:#8b8b8b;word-spacing:4px">3</div>
<div class="t" style="left:812px;width:60px;text-align:center;top:132px;font-size:9.5px;color:#8b8b8b;word-spacing:4px">3 1/4</div>
<div class="t" style="left:884px;width:60px;text-align:center;top:132px;font-size:9.5px;color:#8b8b8b;word-spacing:4px">3 1/2</div>
<div class="t" style="left:956px;width:60px;text-align:center;top:132px;font-size:9.5px;color:#8b8b8b;word-spacing:4px">3 3/4</div>
<div class="t" style="left:1028px;width:60px;text-align:center;top:132px;font-size:9.5px;color:#8b8b8b;word-spacing:4px">4</div>
<div class="t" style="left:1100px;width:60px;text-align:center;top:132px;font-size:9.5px;color:#8b8b8b;word-spacing:4px">4 1/4</div>
<div class="t" style="left:1172px;width:60px;text-align:center;top:132px;font-size:9.5px;color:#8b8b8b;word-spacing:4px">4 1/2</div>
<div class="t" style="left:1229px;top:132px;font-size:9.5px;letter-spacing:0.174px;color:#8b8b8b;">inches</div>
<svg style="left:0px;top:0px" width="60" height="720" viewBox="0 0 60 720" ><path d="M42 163.5 H47 M46 181.5 H47 M45 199.5 H47 M46 217.5 H47 M42 235.5 H47 M46 253.5 H47 M45 271.5 H47 M46 289.5 H47 M42 307.5 H47 M46 325.5 H47 M45 343.5 H47 M46 361.5 H47 M42 379.5 H47 M46 397.5 H47 M45 415.5 H47 M46 433.5 H47 M42 451.5 H47 M46 469.5 H47 M45 487.5 H47 M46 505.5 H47 M42 523.5 H47 M46 541.5 H47 M45 559.5 H47 M46 577.5 H47 M42 595.5 H47 M46 613.5 H47 M45 631.5 H47 M46 649.5 H47 M42 667.5 H47 M46 685.5 H47 M45 703.5 H47" stroke="#7d7d7d" stroke-width="1"/></svg>
<div class="t" style="left:7px;width:60px;text-align:center;top:156px;font-size:9.5px;color:#8b8b8b;word-spacing:4px;transform:rotate(-90deg);transform-origin:50% 50%">5 1/2</div>
<div class="t" style="left:7px;width:60px;text-align:center;top:228px;font-size:9.5px;color:#8b8b8b;word-spacing:4px;transform:rotate(-90deg);transform-origin:50% 50%">5 1/4</div>
<div class="t" style="left:7px;width:60px;text-align:center;top:300px;font-size:9.5px;color:#8b8b8b;word-spacing:4px;transform:rotate(-90deg);transform-origin:50% 50%">5</div>
<div class="t" style="left:7px;width:60px;text-align:center;top:372px;font-size:9.5px;color:#8b8b8b;word-spacing:4px;transform:rotate(-90deg);transform-origin:50% 50%">4 3/4</div>
<div class="t" style="left:7px;width:60px;text-align:center;top:444px;font-size:9.5px;color:#8b8b8b;word-spacing:4px;transform:rotate(-90deg);transform-origin:50% 50%">4 1/2</div>
<div class="t" style="left:7px;width:60px;text-align:center;top:516px;font-size:9.5px;color:#8b8b8b;word-spacing:4px;transform:rotate(-90deg);transform-origin:50% 50%">4 1/4</div>
<div class="t" style="left:7px;width:60px;text-align:center;top:588px;font-size:9.5px;color:#8b8b8b;word-spacing:4px;transform:rotate(-90deg);transform-origin:50% 50%">4</div>
<div class="t" style="left:8px;width:60px;text-align:center;top:689px;font-size:9.5px;color:#8b8b8b;transform:rotate(-90deg);transform-origin:50% 50%">inches</div>
<svg style="left:35px;top:136px" width="13" height="12" viewBox="0 0 13 12" ><path d="M0.8 3.5 H11.5 M3.5 0.8 V11.5" stroke="#000" stroke-width="1.2" stroke-dasharray="2 1.6"/><path d="M5.2 5.2 L9.6 9.6" stroke="#000" stroke-width="1.1"/><path d="M10.4 10.4 L10.4 6.6 L6.6 10.4 Z" fill="#000"/></svg>
<svg style="left:114px;top:133px" width="1" height="15" viewBox="0 0 1 15" ><path d="M0.5 0 V15" stroke="#000" stroke-width="1" stroke-dasharray="3 3"/></svg>
<svg style="left:32px;top:340px" width="15" height="1" viewBox="0 0 15 1" ><path d="M0 0.5 H15" stroke="#000" stroke-width="1" stroke-dasharray="3 3"/></svg>
<div class="box" style="left:48px;top:149px;width:1212px;height:1px;background:#808080;"></div>
<div class="box" style="left:48px;top:149px;width:1px;height:566px;background:#808080;"></div>
<div class="box" style="left:49px;top:697px;width:607px;height:1px;background:#8a8a8a;"></div>
<svg style="left:0px;top:0px" width="1279" height="767" viewBox="0 0 1279 767" ><ellipse cx="621.45" cy="392.4" rx="149.95" ry="145" fill="none" stroke="#1a1a1a" stroke-width="1"/>
<g fill="#000"><rect x="460" y="236" width="7" height="7"/><rect x="617" y="236" width="7" height="7"/><rect x="774" y="236" width="7" height="7"/>
<rect x="460" y="388" width="7" height="7"/><rect x="774" y="388" width="7" height="7"/>
<rect x="460" y="540" width="7" height="7"/><rect x="617" y="540" width="7" height="7"/><rect x="774" y="540" width="7" height="7"/></g>
<path d="M619 390 L624 395 M624 390 L619 395" stroke="#000" stroke-width="2" stroke-linecap="square"/>
<rect x="619.5" y="245.5" width="3" height="3" fill="#fff" stroke="#000" stroke-width="1"/></svg>
<div class="box" style="left:1244px;top:151px;width:16px;height:16px;background:#f0f0f0;"></div>
<svg style="left:1247px;top:155px" width="10" height="7" viewBox="0 0 10 7" ><path d="M1.6 5.6 L5 2 L8.4 5.6" fill="none" stroke="#3a3a3a" stroke-width="1.9"/></svg>
<div class="box" style="left:1244px;top:423px;width:15px;height:43px;background:#c9c9c9;"></div>
<div class="box" style="left:1244px;top:680px;width:16px;height:17px;background:#f0f0f0;"></div>
<svg style="left:1247px;top:685px" width="10" height="7" viewBox="0 0 10 7" ><path d="M1.6 1.6 L5 5.2 L8.4 1.6" fill="none" stroke="#3a3a3a" stroke-width="1.9"/></svg>
<div class="box" style="left:1261px;top:110px;width:18px;height:625px;background:#f0f0f0;"></div>
<div class="box" style="left:1261px;top:110px;width:1px;height:587px;background:#fafafa;"></div>
<div class="box" style="left:1261px;top:697px;width:1px;height:38px;background:#dcdcdc;"></div>
<svg style="left:1265px;top:115px" width="11" height="3" viewBox="0 0 11 3" ><path d="M0.2 2.2 L2 0.4 M4.2 2.2 L6 0.4 M8.2 2.2 L10 0.4" stroke="#b0b0b0" stroke-width="1.5"/></svg>
<svg style="left:1267.8px;top:121px" width="6" height="9.4" viewBox="0 0 6 9.4" ><path d="M0 0 L5.4 4.7 L0 9.4 Z" fill="#000"/></svg>
<svg style="left:1264px;top:134px" width="14" height="14" viewBox="0 0 14 14" ><path d="M1 13 L2 10.5 L7.5 5 L9.5 7 L4 12.5 Z" fill="#b8b8b8"/><path d="M7 3.5 L11 7.5 M8.5 5 L10.5 2 C11.5 0.8 13.6 2.6 12.4 3.8 L9.8 6" stroke="#b0b0b0" stroke-width="2" fill="none"/></svg>
<svg style="left:1267px;top:153.5px" width="8" height="5" viewBox="0 0 8 5" ><path d="M0.6 4.4 L4 1 L7.4 4.4" fill="none" stroke="#c4c4c4" stroke-width="1.2"/></svg>
<div class="box" style="left:1262px;top:164px;width:17px;height:528px;background:#575757;"></div>
<div class="box" style="left:1262px;top:164px;width:17px;height:17px;background:#fff;border-left:1px solid #555;border-top:1px solid #555"></div>
<svg style="left:1263px;top:165px" width="16" height="16" viewBox="0 0 16 16" ><path d="M1.5 1.5 L15 14.5 M15 1.5 L1.5 14.5" stroke="#222" stroke-width="1"/></svg>
<div class="box" style="left:1262px;top:181px;width:17px;height:18px;background:#fff;"></div>
<div class="box" style="left:1263px;top:182px;width:16px;height:16px;background:#231f20;"></div>
<div class="box" style="left:1263px;top:199px;width:16px;height:16px;background:#414042;"></div>
<div class="box" style="left:1263px;top:216px;width:16px;height:16px;background:#58595b;"></div>
<div class="box" style="left:1263px;top:233px;width:16px;height:16px;background:#6d6e71;"></div>
<div class="box" style="left:1263px;top:250px;width:16px;height:16px;background:#808285;"></div>
<div class="box" style="left:1263px;top:267px;width:16px;height:16px;background:#939598;"></div>
<div class="box" style="left:1263px;top:284px;width:16px;height:16px;background:#a7a9ac;"></div>
<div class="box" style="left:1263px;top:301px;width:16px;height:16px;background:#bcbec0;"></div>
<div class="box" style="left:1263px;top:318px;width:16px;height:16px;background:#d1d3d4;"></div>
<div class="box" style="left:1263px;top:335px;width:16px;height:16px;background:#e6e7e8;"></div>
<div class="box" style="left:1263px;top:352px;width:16px;height:16px;background:#ffffff;"></div>
<div class="box" style="left:1263px;top:369px;width:16px;height:16px;background:#2e3192;"></div>
<div class="box" style="left:1263px;top:386px;width:16px;height:16px;background:#00aeef;"></div>
<div class="box" style="left:1263px;top:403px;width:16px;height:16px;background:#00a651;"></div>
<div class="box" style="left:1263px;top:420px;width:16px;height:16px;background:#fff200;"></div>
<div class="box" style="left:1263px;top:437px;width:16px;height:16px;background:#ed1c24;"></div>
<div class="box" style="left:1263px;top:454px;width:16px;height:16px;background:#ec008c;"></div>
<div class="box" style="left:1263px;top:471px;width:16px;height:16px;background:#a0468c;"></div>
<div class="box" style="left:1263px;top:488px;width:16px;height:16px;background:#f58220;"></div>
<div class="box" style="left:1263px;top:505px;width:16px;height:16px;background:#f7adaf;"></div>
<div class="box" style="left:1263px;top:522px;width:16px;height:16px;background:#7b6a61;"></div>
<div class="box" style="left:1263px;top:539px;width:16px;height:16px;background:#c7c5e3;"></div>
<div class="box" style="left:1263px;top:556px;width:16px;height:16px;background:#9c96cb;"></div>
<div class="box" style="left:1263px;top:573px;width:16px;height:16px;background:#6787c6;"></div>
<div class="box" style="left:1263px;top:590px;width:16px;height:16px;background:#7170b8;"></div>
<div class="box" style="left:1263px;top:607px;width:16px;height:16px;background:#7f7ea9;"></div>
<div class="box" style="left:1263px;top:624px;width:16px;height:16px;background:#43598b;"></div>
<div class="box" style="left:1263px;top:641px;width:16px;height:16px;background:#4b4a6d;"></div>
<div class="box" style="left:1263px;top:658px;width:16px;height:16px;background:#5f799b;"></div>
<div class="box" style="left:1263px;top:675px;width:16px;height:16px;background:#0095d7;"></div>
<div class="box" style="left:1263px;top:692px;width:16px;height:3px;background:#8fd4f6;"></div>
<svg style="left:1266px;top:700px" width="9" height="6" viewBox="0 0 9 6" ><path d="M0.8 1 L4.5 4.8 L8.2 1" fill="none" stroke="#bdbdbd" stroke-width="1.2"/></svg>
<div class="t" style="left:1266px;top:711px;font-size:13px;color:#b5b5b5;">»</div>
<div class="box" style="left:4px;top:114px;width:23px;height:23px;background:#fff;border:1px solid #a6a6a6"></div>
<svg style="left:9px;top:116px" width="13" height="17" viewBox="0 0 13 17" ><path d="M2 1.3 V12.6 L4.9 10.2 L7 15.4 L9 14.6 L7 9.6 L10.8 9.4 Z" fill="#fff" stroke="#6a6d8c" stroke-width="1.1" stroke-linejoin="round"/></svg>
<svg style="left:20px;top:130px" width="5" height="5" viewBox="0 0 5 5" ><path d="M5 0 V5 H0 Z" fill="#000"/></svg>
<svg style="left:7px;top:144px" width="18" height="18" viewBox="0 0 18 18" ><path d="M5.5 0.8 C3.8 6 4 11 5.8 16" fill="none" stroke="#6a6d8c" stroke-width="1.1"/>
<rect x="2.6" y="5.2" width="3.4" height="3.4" fill="#fff" stroke="#23242c" stroke-width="1"/>
<path d="M7.2 8.5 L14.4 10.4 L10.4 15 Z" fill="#23242c"/></svg>
<svg style="left:20px;top:158px" width="5" height="5" viewBox="0 0 5 5" ><path d="M5 0 V5 H0 Z" fill="#000"/></svg>
<svg style="left:7px;top:173px" width="17" height="17" viewBox="0 0 17 17" ><path d="M4.5 0.5 V12.5 H15.5 M1 4.5 H12.5 V15.5" fill="none" stroke="#4a4c6a" stroke-width="1.8"/><path d="M14.5 1.5 L6 10.5" stroke="#4a4c6a" stroke-width="1.1"/>
<path d="M4.5 4.5 H8" stroke="#7fb6b6" stroke-width="1"/></svg>
<svg style="left:20px;top:186px" width="5" height="5" viewBox="0 0 5 5" ><path d="M5 0 V5 H0 Z" fill="#000"/></svg>
<svg style="left:6px;top:201px" width="18" height="18" viewBox="0 0 18 18" ><circle cx="6.9" cy="6.9" r="5.6" fill="#fff" stroke="#4a4c6a" stroke-width="1.2"/><path d="M2.2 7.4 H11.6 A4.8 4.8 0 0 1 2.2 7.4 Z" fill="#c9ccdd"/>
<path d="M11 11 L16 16" stroke="#23242c" stroke-width="2.2"/></svg>
<svg style="left:20px;top:214px" width="5" height="5" viewBox="0 0 5 5" ><path d="M5 0 V5 H0 Z" fill="#000"/></svg>
<svg style="left:8px;top:229px" width="16" height="16" viewBox="0 0 16 16" ><path d="M2 2.5 L12 13" stroke="#4a4c6a" stroke-width="1"/><rect x="5.6" y="6.4" width="3.2" height="3.2" fill="#fff" stroke="#4a4c6a" stroke-width="1"/>
<circle cx="2" cy="2.6" r="1.1" fill="#23242c"/><circle cx="12" cy="13" r="1.1" fill="#23242c"/></svg>
<svg style="left:20px;top:242px" width="5" height="5" viewBox="0 0 5 5" ><path d="M5 0 V5 H0 Z" fill="#000"/></svg>
<svg style="left:6px;top:256px" width="18" height="18" viewBox="0 0 18 18" ><rect x="7.5" y="9.5" width="7" height="6.5" fill="none" stroke="#5d6080" stroke-width="1.1"/><rect x="10" y="7" width="7" height="6.5" fill="#f3f3f3" stroke="#5d6080" stroke-width="1.1"/>
<path d="M10 8 V13 H14.5 V11 H12 V8 Z" fill="#f28a00"/>
<path d="M1.5 5.5 L5.5 1.5 L9.5 5.5 L5.5 9.5 Z" fill="#fff" stroke="#5d6080" stroke-width="1.1"/><path d="M2.8 6 H8.6 L5.5 9 Z" fill="#f28a00"/><path d="M4.5 0.6 L7.5 4" stroke="#23242c" stroke-width="1.3"/></svg>
<svg style="left:9px;top:288px" width="13" height="12" viewBox="0 0 13 12" ><rect x="0.6" y="0.6" width="11.4" height="10.6" fill="#fff" stroke="#4a4c6a" stroke-width="1.1"/><rect x="1.2" y="6" width="10.2" height="4.6" fill="#d5d8e6"/></svg>
<svg style="left:20px;top:298px" width="5" height="5" viewBox="0 0 5 5" ><path d="M5 0 V5 H0 Z" fill="#000"/></svg>
<svg style="left:8px;top:315px" width="14" height="14" viewBox="0 0 14 14" ><circle cx="7" cy="7" r="5.9" fill="#fff" stroke="#4a4c6a" stroke-width="1.1"/><path d="M1.7 8 H12.3 A5.4 5.4 0 0 1 1.7 8 Z" fill="#d5d8e6"/></svg>
<svg style="left:20px;top:326px" width="5" height="5" viewBox="0 0 5 5" ><path d="M5 0 V5 H0 Z" fill="#000"/></svg>
<svg style="left:7px;top:344px" width="16" height="12" viewBox="0 0 16 12" ><path d="M1 6 L4.4 0.6 H11.6 L15 6 L11.6 11.4 H4.4 Z" fill="#fff" stroke="#4a4c6a" stroke-width="1.1"/><path d="M2 6.6 H14 L11.3 10.8 H4.7 Z" fill="#d5d8e6"/></svg>
<svg style="left:20px;top:354px" width="5" height="5" viewBox="0 0 5 5" ><path d="M5 0 V5 H0 Z" fill="#000"/></svg>
<div class="t" style="left:7px;top:368px;width:16px;height:20px;line-height:20px;font-size:19px;font-weight:bold;text-align:center;color:#e9eaf2;-webkit-text-stroke:1.1px #6a6d8c;">A</div>
<svg style="left:20px;top:382px" width="5" height="5" viewBox="0 0 5 5" ><path d="M5 0 V5 H0 Z" fill="#000"/></svg>
<svg style="left:7px;top:398px" width="17" height="14" viewBox="0 0 17 14" ><path d="M2.5 10.5 L14 2.8" stroke="#23242c" stroke-width="1.3"/><path d="M1 7.5 L4.6 12.8 M11.8 0.8 L15.6 5.6" stroke="#23242c" stroke-width="1.3"/>
<path d="M2.5 10.5 L6.2 9.8 L4.6 7.4 Z M14 2.8 L10.4 3.4 L12 5.8 Z" fill="#23242c"/></svg>
<svg style="left:20px;top:410px" width="5" height="5" viewBox="0 0 5 5" ><path d="M5 0 V5 H0 Z" fill="#000"/></svg>
<svg style="left:9px;top:424px" width="13" height="18" viewBox="0 0 13 18" ><path d="M3.2 3.4 L9 14" stroke="#4a4c6a" stroke-width="1.1"/><rect x="1.2" y="1" width="4" height="4" fill="#f28a00" stroke="#8a6a5a" stroke-width="0.9"/><rect x="6.6" y="12.4" width="4" height="4" fill="#f28a00" stroke="#8a6a5a" stroke-width="0.9"/></svg>
<svg style="left:20px;top:438px" width="5" height="5" viewBox="0 0 5 5" ><path d="M5 0 V5 H0 Z" fill="#000"/></svg>
<svg style="left:8px;top:456px" width="14" height="14" viewBox="0 0 14 14" ><rect x="3.2" y="3.2" width="9.6" height="9.6" fill="#5d6080" opacity="0.75"/><rect x="0.6" y="0.6" width="9.4" height="9" fill="#fff" stroke="#4a4c6a" stroke-width="1.1"/><rect x="1.2" y="5" width="8.2" height="4" fill="#d5d8e6"/></svg>
<svg style="left:20px;top:466px" width="5" height="5" viewBox="0 0 5 5" ><path d="M5 0 V5 H0 Z" fill="#000"/></svg>
<svg style="left:6px;top:480px" width="18" height="18" viewBox="0 0 18 18" ><path d="M2 10.5 L5.5 14.8 M3.8 12.6 L8.5 8.6" stroke="#7f86ad" stroke-width="1.1"/>
<path d="M7.2 2 L13.8 7.4 C12 10.6 8.6 10.8 6.6 8.8 C5.2 7 5.6 4 7.2 2 Z" fill="#fff" stroke="#5d6080" stroke-width="1"/><path d="M6.2 6.2 L12.8 8.6 C11 10.6 8.4 10.4 6.8 8.8 Z" fill="#2d2f6a"/>
<linearGradient id="tg" x1="0" y1="0" x2="0" y2="1"><stop offset="0" stop-color="#c9ccdd"/><stop offset="1" stop-color="#2d2f6a"/></linearGradient>
<path d="M13 9.5 L17 17 H9.5 Z" fill="url(#tg)"/></svg>
<svg style="left:6px;top:507px" width="18" height="19" viewBox="0 0 18 19" ><rect x="1" y="10.4" width="7.6" height="7.6" fill="#f28a00"/><path d="M1 14.2 H8.6 M4.8 10.4 V18" stroke="#c85a00" stroke-width="0.8"/><rect x="3.6" y="13.6" width="2" height="2" fill="#ffd9a0"/>
<path d="M5.6 14.4 L6.6 11.6 L11.6 6.6 L13.4 8.4 L8.4 13.4 Z" fill="#aeb2c8" stroke="#4a4c6a" stroke-width="0.9"/>
<path d="M10.4 5 L15 9.6" stroke="#23242c" stroke-width="2.2"/><path d="M12.4 7.2 L15.6 3" stroke="#23242c" stroke-width="3.4" stroke-linecap="round"/></svg>
<svg style="left:20px;top:522px" width="5" height="5" viewBox="0 0 5 5" ><path d="M5 0 V5 H0 Z" fill="#000"/></svg>
<svg style="left:7px;top:536px" width="18" height="18" viewBox="0 0 18 18" ><linearGradient id="fg" x1="0" y1="0" x2="0" y2="1"><stop offset="0" stop-color="#ffe9b8"/><stop offset="1" stop-color="#f28a00"/></linearGradient>
<path d="M10 7.5 L14.6 16.6 H5.4 Z" fill="url(#fg)"/>
<path d="M1.6 6.5 L6 2.2 L10.2 6.5 L6 10.8 Z" fill="#fff" stroke="#4a4c6a" stroke-width="1.1"/><path d="M3 7 H9.2 L6 10.2 Z" fill="#f28a00"/><path d="M4.6 1 L8 4.8" stroke="#23242c" stroke-width="1.4"/></svg>
<svg style="left:20px;top:550px" width="5" height="5" viewBox="0 0 5 5" ><path d="M5 0 V5 H0 Z" fill="#000"/></svg>
<svg style="left:9px;top:564px" width="12" height="17" viewBox="0 0 12 17" ><path d="M6 1 C9 4.4 9.8 8.4 8 12.6 H4 C2.2 8.4 3 4.4 6 1 Z" fill="#fff" stroke="#3d3f55" stroke-width="1.1"/><path d="M6 3 V8.4" stroke="#3d3f55" stroke-width="0.9"/><circle cx="6" cy="9" r="1" fill="#3d3f55"/>
<rect x="1.4" y="14" width="9.2" height="1.8" fill="#23242c"/></svg>
<svg style="left:20px;top:578px" width="5" height="5" viewBox="0 0 5 5" ><path d="M5 0 V5 H0 Z" fill="#000"/></svg>
<svg style="left:6px;top:592px" width="18" height="17" viewBox="0 0 18 17" ><rect x="4.6" y="1" width="12" height="11" fill="#fff" stroke="#4a4c6a" stroke-width="1.1"/><rect x="4.6" y="1" width="12" height="2.4" fill="#4a4c6a"/>
<path d="M10.5 5.5 H15 M10.5 7.5 H15 M10.5 9.5 H15" stroke="#8f93b8" stroke-width="0.9"/>
<path d="M1 11 L5.4 6.6 L9.8 11 L5.4 15.4 Z" fill="#fff" stroke="#4a4c6a" stroke-width="1"/><path d="M2.2 11.4 H8.6 L5.4 14.6 Z" fill="#f28a00"/><path d="M6.4 4.6 L10.6 11" stroke="#23242c" stroke-width="1.2"/></svg>
<div class="box" style="left:4px;top:619px;width:22px;height:1px;background:#d4d4d4;"></div>
<svg style="left:6px;top:634px" width="19" height="19" viewBox="0 0 19 19" ><circle cx="9.4" cy="9.4" r="8.4" fill="#f6f6f6" stroke="#b9b9b9" stroke-width="1.1"/><path d="M9.4 3.6 V15.2 M3.6 9.4 H15.2" stroke="#bdbdbd" stroke-width="1.8"/></svg>
<div class="box" style="left:49px;top:698px;width:606px;height:17px;background:#f3f3f3;"></div>
<svg style="left:52px;top:699px" width="10" height="12" viewBox="0 0 10 12" ><path d="M0.6 0.6 H5.6 L8.6 3.6 V11.4 H0.6 Z" fill="#fff" stroke="#111" stroke-width="1.1"/><path d="M5.6 0.6 V3.6 H8.6" fill="none" stroke="#111" stroke-width="0.9"/><path d="M4.6 4.6 V9.6 M2.1 7.1 H7.1" stroke="#111" stroke-width="1.1"/></svg>
<svg style="left:197.5px;top:699px" width="10" height="12" viewBox="0 0 10 12" ><path d="M0.6 0.6 H5.6 L8.6 3.6 V11.4 H0.6 Z" fill="#fff" stroke="#111" stroke-width="1.1"/><path d="M5.6 0.6 V3.6 H8.6" fill="none" stroke="#111" stroke-width="0.9"/><path d="M4.6 4.6 V9.6 M2.1 7.1 H7.1" stroke="#111" stroke-width="1.1"/></svg>
<svg style="left:70px;top:701px" width="8" height="9" viewBox="0 0 8 9" ><path d="M0.6 0 V9" stroke="#6b6b6b" stroke-width="1.2"/><path d="M7.4 0 V9 L2 4.5 Z" fill="#6b6b6b"/></svg>
<svg style="left:88.5px;top:701px" width="6" height="9" viewBox="0 0 6 9" ><path d="M6 0 V9 L0.4 4.5 Z" fill="#6b6b6b"/></svg>
<div class="t" style="left:115.5px;top:700px;font-size:12px;letter-spacing:-0.500px;color:#000;">1 of 1</div>
<svg style="left:166.5px;top:701px" width="6" height="9" viewBox="0 0 6 9" ><path d="M0 0 V9 L5.6 4.5 Z" fill="#6b6b6b"/></svg>
<svg style="left:181.5px;top:701px" width="8" height="9" viewBox="0 0 8 9" ><path d="M7.4 0 V9" stroke="#6b6b6b" stroke-width="1.2"/><path d="M0.6 0 V9 L6 4.5 Z" fill="#6b6b6b"/></svg>
<svg style="left:212px;top:697px" width="68" height="18" viewBox="0 0 68 18" ><path d="M0.5 18 V0.5 H59.5 L66.5 8 V18" fill="#fff" stroke="#a9a9a9" stroke-width="1"/></svg>
<div class="t" style="left:227.5px;top:698px;font-size:12px;letter-spacing:-0.836px;color:#000;">Page 1</div>
<svg style="left:649px;top:700px" width="4" height="12" viewBox="0 0 4 12" ><path d="M0.8 2.6 L2.8 0.8 M0.8 6.6 L2.8 4.8 M0.8 10.6 L2.8 8.8" stroke="#b4b4b4" stroke-width="1.3"/></svg>
<div class="box" style="left:655px;top:697px;width:1px;height:17px;background:#858585;"></div>
<div class="box" style="left:656px;top:697px;width:588px;height:18px;background:#fff;"></div>
<div class="box" style="left:657px;top:698px;width:16px;height:16px;background:#f0f0f0;"></div>
<svg style="left:660.5px;top:700.5px" width="7" height="10" viewBox="0 0 7 10" ><path d="M5.4 1.6 L1.8 5 L5.4 8.4" fill="none" stroke="#3a3a3a" stroke-width="1.9"/></svg>
<div class="box" style="left:834px;top:698px;width:128px;height:15px;background:#cacaca;"></div>
<div class="box" style="left:1226px;top:698px;width:17px;height:16px;background:#f0f0f0;"></div>
<svg style="left:1231px;top:701px" width="7" height="10" viewBox="0 0 7 10" ><path d="M1.6 1.6 L5.2 5 L1.6 8.4" fill="none" stroke="#3a3a3a" stroke-width="1.9"/></svg>
<div class="box" style="left:1244px;top:697px;width:17px;height:18px;background:#fff;"></div>
<svg style="left:1245px;top:700px" width="14" height="13" viewBox="0 0 14 13" ><circle cx="5.6" cy="5.6" r="4.6" fill="#fff" stroke="#3d3560" stroke-width="1.2"/><circle cx="5.6" cy="5.6" r="1.8" fill="none" stroke="#3d3560" stroke-width="1"/><path d="M5.6 1 V3.8 M5.6 7.4 V10.2 M1 5.6 H3.8 M7.4 5.6 H10.2" stroke="#3d3560" stroke-width="0.9"/><path d="M9 9 L13 12.6" stroke="#3d3560" stroke-width="2"/></svg>
<div class="box" style="left:30px;top:715px;width:1231px;height:1px;background:#d2d2d2;"></div>
<div class="box" style="left:0px;top:734px;width:1279px;height:1px;background:#cfcfcf;"></div>
<div class="box" style="left:31px;top:716px;width:1230px;height:18px;background:#f3f3f3;"></div>
<svg style="left:33px;top:719px" width="4" height="12" viewBox="0 0 4 12" ><path d="M0.8 2.6 L2.8 0.8 M0.8 6.6 L2.8 4.8 M0.8 10.6 L2.8 8.8" stroke="#b4b4b4" stroke-width="1.3"/></svg>
<svg style="left:42px;top:720px" width="6" height="9" viewBox="0 0 6 9" ><path d="M0 0 L5.4 4.5 L0 9 Z" fill="#000"/></svg>
<svg style="left:53px;top:719px" width="14" height="13" viewBox="0 0 14 13" ><path d="M0.8 12 L1.6 9.4 L6.4 4.6 L8.4 6.6 L3.6 11.4 Z" fill="#6c8ca8" stroke="#4a5a78" stroke-width="0.7"/><path d="M5.8 3 L10 7.2" stroke="#23242c" stroke-width="1.8"/><path d="M8.2 4.8 L11.6 1.4" stroke="#23242c" stroke-width="3" stroke-linecap="round"/></svg>
<svg style="left:71px;top:720px" width="7" height="10" viewBox="0 0 7 10" ><path d="M5.6 0.8 L1.2 5 L5.6 9.2" fill="none" stroke="#c8c8c8" stroke-width="1.3"/></svg>
<div class="box" style="left:83px;top:716px;width:18px;height:18px;background:#fff;border:1px solid #222"></div>
<svg style="left:84px;top:717px" width="16" height="16" viewBox="0 0 16 16" ><path d="M0 0 L16 16 M16 0 L0 16" stroke="#222" stroke-width="1"/></svg>
<div class="box" style="left:101px;top:716px;width:17px;height:18px;background:#231f20;"></div>
<svg style="left:1226px;top:719px" width="8" height="11" viewBox="0 0 8 11" ><path d="M1 0.8 L6 5.5 L1 10.2" fill="none" stroke="#c9c9c9" stroke-width="1.4"/></svg>
<div class="t" style="left:1242.5px;top:717px;font-size:13px;color:#b5b5b5;">»</div>
<div class="box" style="left:0px;top:735px;width:1279px;height:32px;background:#f3f3f3;"></div>
<div class="t" style="left:5px;top:745px;font-size:12px;letter-spacing:-0.472px;color:#000;">( 0.722 , 4.884&nbsp; )</div>
<div class="box" style="left:94px;top:744px;width:14px;height:14px;background:#fff;border:1px solid #000"></div>
<svg style="left:98px;top:746px" width="8" height="10" viewBox="0 0 8 10" ><path d="M0.4 0.2 L7.2 5 L0.4 9.8 Z" fill="#000"/></svg>
<div class="t" style="left:158px;top:745px;font-size:12px;letter-spacing:-0.354px;color:#000;">Ellipse on Layer 1</div>
<svg style="left:826px;top:743px" width="16" height="17" viewBox="0 0 16 17" ><rect x="0.6" y="0.6" width="14.6" height="12" rx="1" fill="#b7a4c4" stroke="#6a6d9c" stroke-width="1"/><rect x="2" y="2" width="11.8" height="3" fill="#d9564a"/><rect x="2" y="5" width="11.8" height="3" fill="#6aa36a"/><rect x="2" y="8" width="11.8" height="3.2" fill="#5b7bc0"/>
<circle cx="7.9" cy="6.6" r="2.6" fill="#fff" stroke="#23242c" stroke-width="1.1"/><path d="M4 15.6 H12" stroke="#6a6d9c" stroke-width="1.2"/></svg>
<svg style="left:854px;top:743px" width="17" height="17" viewBox="0 0 17 17" ><path d="M1 9 L7.6 2.4 L14 9 L7.6 15.4 Z" fill="#fff" stroke="#3d3f55" stroke-width="1.1"/><path d="M2.4 9.4 H13 L7.6 14.6 Z" fill="#f28a00"/><path d="M5.6 0.6 L10 5.6" stroke="#23242c" stroke-width="1.3"/><path d="M14.2 9 C16 10.5 15.8 12.6 15.6 14.6" fill="none" stroke="#f28a00" stroke-width="1.4"/></svg>
<div class="box" style="left:876px;top:742px;width:18px;height:18px;background:#fff;border:1px solid #222"></div>
<svg style="left:877px;top:743px" width="16" height="16" viewBox="0 0 16 16" ><path d="M0 0 L16 16 M16 0 L0 16" stroke="#222" stroke-width="1"/></svg>
<div class="t" style="left:898px;top:745px;font-size:12px;letter-spacing:-0.047px;color:#000;">None</div>
<div class="box" style="left:1058px;top:740px;width:1px;height:23px;background:#d0d0d0;"></div>
<svg style="left:1067px;top:743px" width="11" height="17" viewBox="0 0 11 17" ><path d="M5.5 1 C8.4 4.4 9.2 8 7.4 12 H3.6 C1.8 8 2.6 4.4 5.5 1 Z" fill="#fff" stroke="#3d3f55" stroke-width="1"/><path d="M5.5 3 V8" stroke="#3d3f55" stroke-width="0.9"/><circle cx="5.5" cy="8.6" r="1" fill="#3d3f55"/><rect x="1.4" y="13.6" width="8.2" height="1.8" fill="#23242c"/></svg>
<div class="box" style="left:1085px;top:742px;width:18px;height:18px;background:#231f20;border:1px solid #8a8a8a"></div>
<div class="t" style="left:1106.5px;top:745px;font-size:12px;letter-spacing:-0.507px;color:#000;">C:0 M:0 Y:0 K:100</div>
<div class="t" style="left:1202.5px;top:745px;font-size:12px;letter-spacing:-0.025px;color:#000;">Hairline</div>
</body></html>
